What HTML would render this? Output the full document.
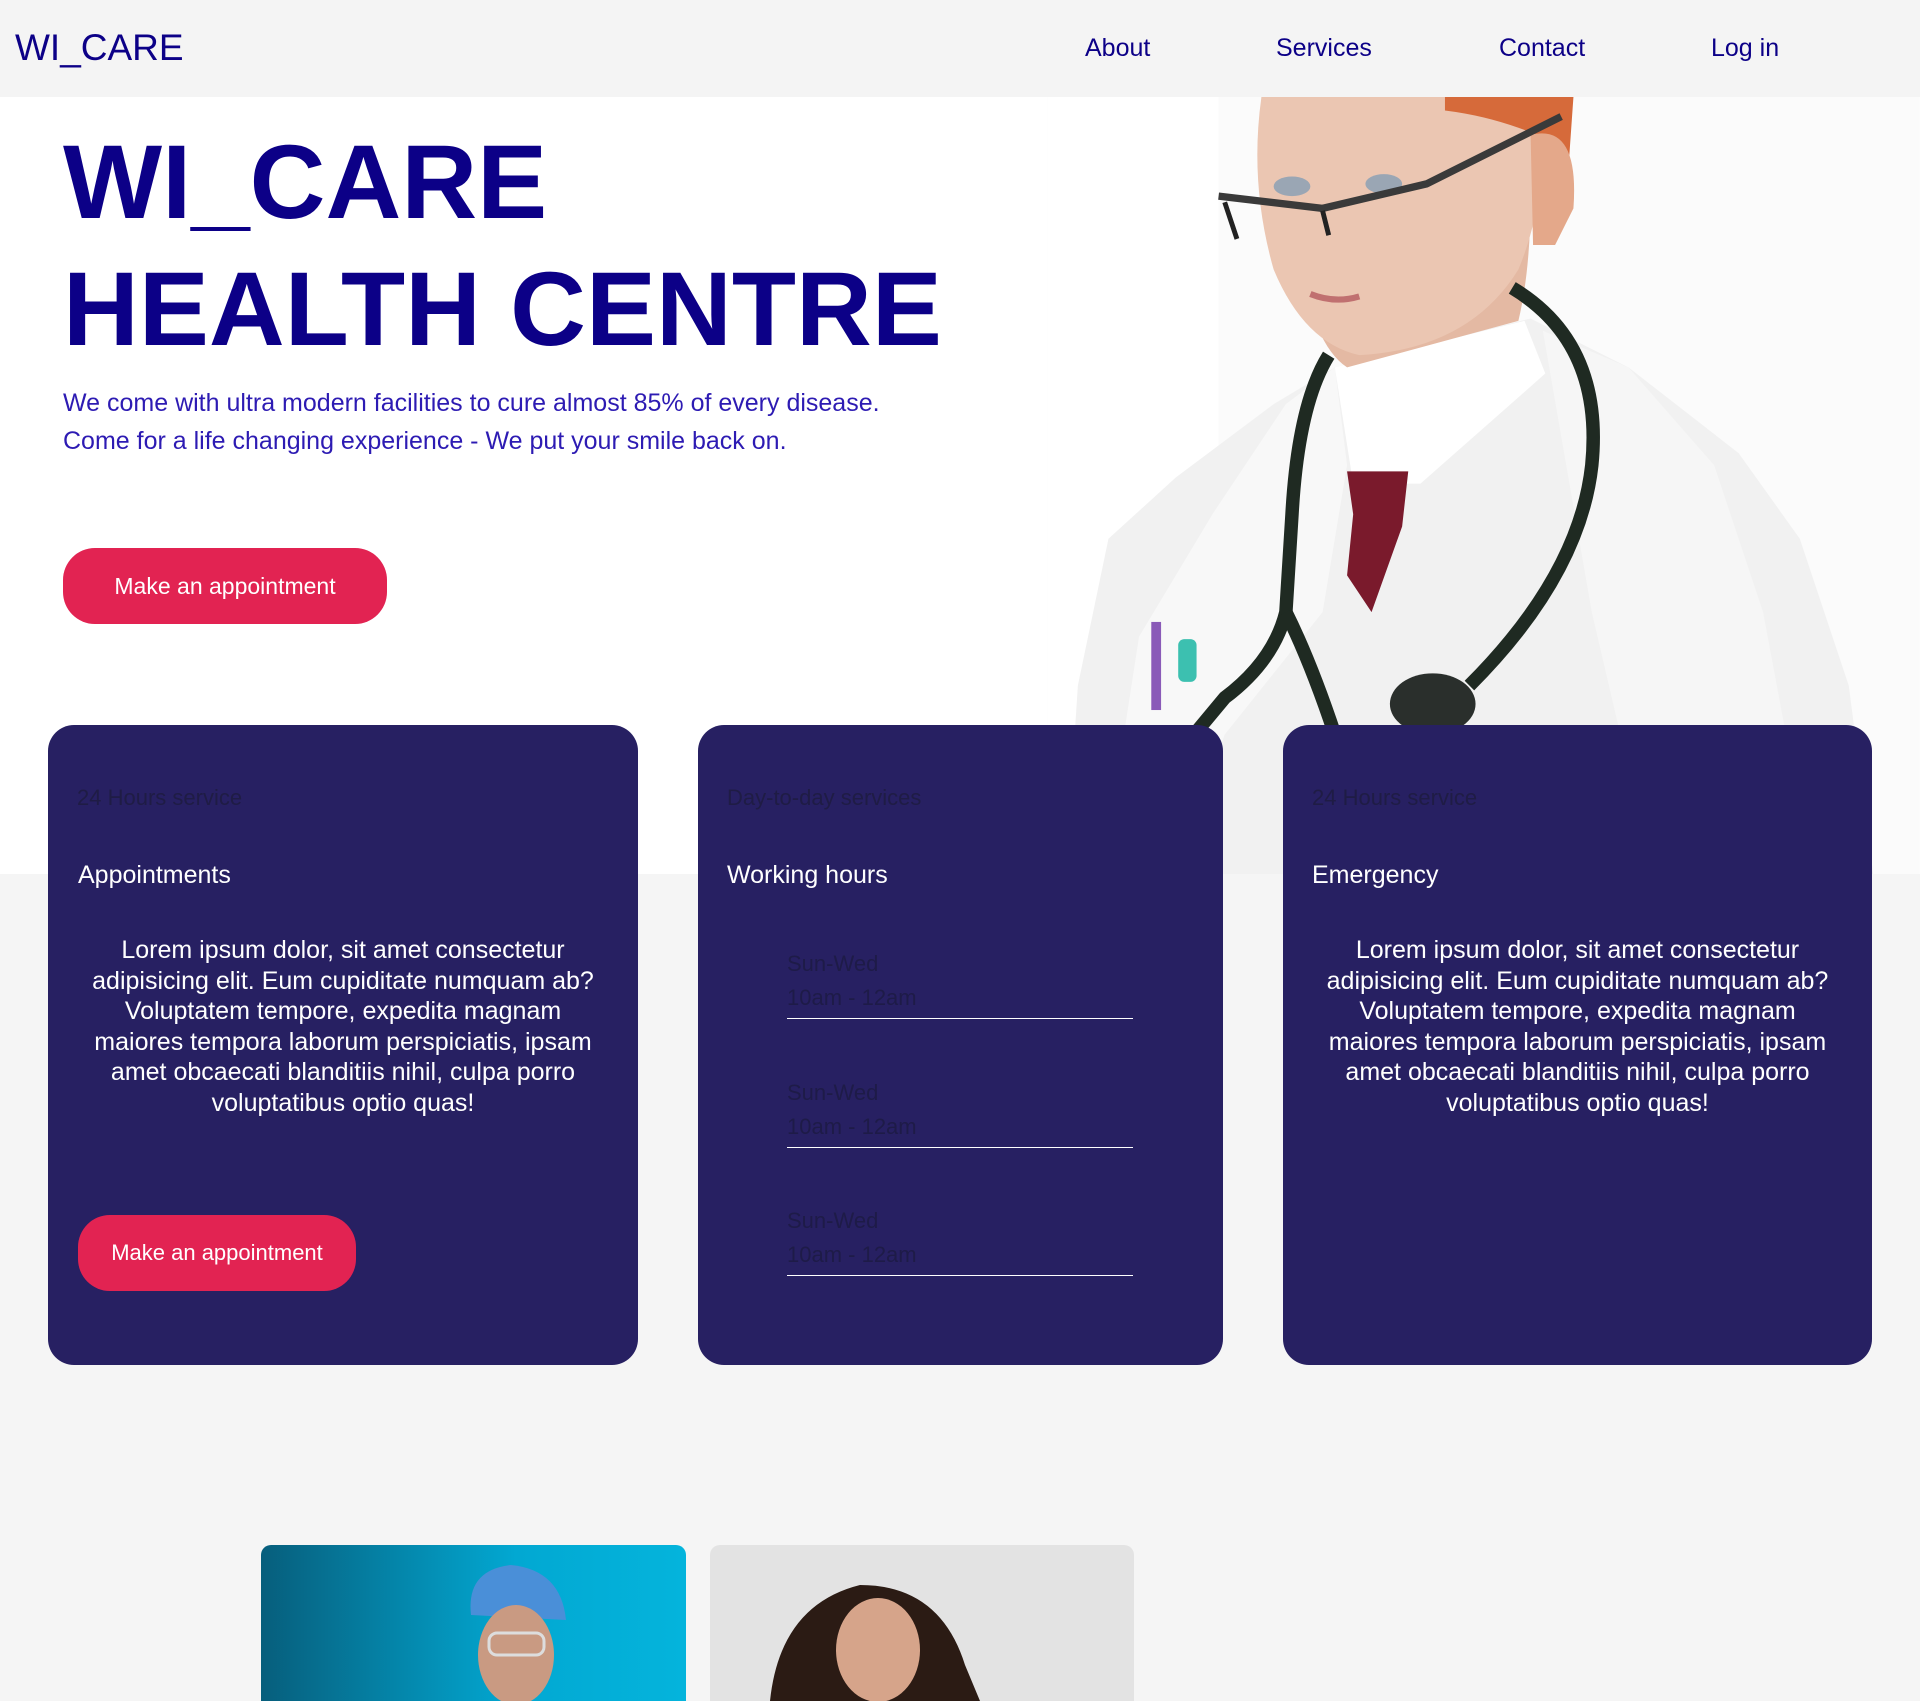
<!DOCTYPE html>
<html><head><meta charset="utf-8">
<style>
*{margin:0;padding:0;box-sizing:border-box}
body{width:1920px;height:1701px;overflow:hidden;background:#f5f5f5;font-family:"Liberation Sans",Arial,sans-serif;position:relative}
.nav{position:absolute;left:0;top:0;width:1920px;height:97px;background:#f4f4f4}
.logo{position:absolute;left:15px;top:25px;font-size:37px;color:#0c0087;line-height:46px}
.nl{position:absolute;top:33px;font-size:25px;color:#0c0087;line-height:30px}
.hero{position:absolute;left:0;top:97px;width:1920px;height:777px;background:#fff}
.t{position:absolute;left:63px;font-weight:bold;font-size:105px;color:#0c0087;line-height:127px;white-space:nowrap}
.p{position:absolute;left:63px;top:287px;font-size:25px;line-height:38px;color:#2d1bb3}
.btn{position:absolute;background:#e22352;color:#fff;border-radius:32px;font-size:23px;text-align:center}
.card{position:absolute;top:725px;height:640px;background:#272062;border-radius:26px}
.lab{position:absolute;top:785px;font-size:22px;color:#1f1c45;line-height:26px}
.h{position:absolute;top:860px;font-size:25px;color:#fff;line-height:30px}
.lo{position:absolute;top:935px;font-size:25px;line-height:30.6px;color:#fff;text-align:center}
.wh{position:absolute;left:787px;width:346px;border-bottom:1.5px solid #fff;font-size:22px;color:#1e1b48;line-height:34px;height:84px;padding-top:12px}
</style></head><body>
<div class="nav">
<div class="logo">WI_CARE</div>
<div class="nl" style="left:1085px">About</div>
<div class="nl" style="left:1276px">Services</div>
<div class="nl" style="left:1499px">Contact</div>
<div class="nl" style="left:1711px">Log in</div>
</div>
<div class="hero">
<svg style="position:absolute;left:1047px;top:0" width="873" height="777" viewBox="855 79 713 635">
<rect x="855" y="79" width="713" height="635" fill="#fbfbfb"/>
<rect x="855" y="79" width="140" height="635" fill="#fff"/>
<path d="M870 714 L880 560 L905 440 L960 390 L1040 330 L1090 300 L1250 260 L1330 300 L1420 370 L1470 440 L1510 560 L1530 714 Z" fill="#f1f1f1"/>
<path d="M990 420 L1050 330 L1090 300 L1100 380 L1080 500 L1000 600 L960 714 L900 714 L930 520 Z" fill="#f8f8f8"/>
<path d="M1260 270 L1330 300 L1400 380 L1440 500 L1480 714 L1350 714 L1300 500 Z" fill="#f6f6f6"/>
<path d="M1090 300 L1245 262 L1262 305 L1160 395 L1105 395 Z" fill="#ffffff"/>
<path d="M1100 385 L1150 385 L1145 430 L1120 500 L1100 470 L1105 420 Z" fill="#7a1a2c"/>
<path d="M1060 200 Q1070 280 1100 300 L1240 262 Q1250 220 1250 160 Z" fill="#e4b9a3"/>
<path d="M1030 79 L1260 79 Q1265 160 1240 220 Q1200 285 1110 290 Q1065 280 1040 220 Q1020 150 1030 79 Z" fill="#ebc6b2"/>
<path d="M1180 79 L1285 79 L1280 150 L1255 110 Q1220 95 1180 90 Z" fill="#d66a3a"/>
<path d="M1250 110 Q1290 100 1285 170 L1270 200 L1252 200 Z" fill="#e4a88a"/>
<ellipse cx="1055" cy="152" rx="15" ry="8" fill="#9aa6b4"/>
<ellipse cx="1130" cy="150" rx="15" ry="8" fill="#9aa6b4"/>
<path d="M995 160 L1080 170 L1165 150 L1275 95" stroke="#3a3a3a" stroke-width="6" fill="none"/>
<path d="M1000 165 L1010 195 M1080 172 L1085 192" stroke="#222" stroke-width="4" fill="none"/>
<path d="M1070 240 Q1090 248 1110 242" stroke="#c07070" stroke-width="5" fill="none"/>
<path d="M1085 290 Q1060 330 1055 420 L1050 500 Q1040 540 1000 570 L975 600" stroke="#1f2a22" stroke-width="11" fill="none"/>
<path d="M1050 500 Q1070 540 1090 600" stroke="#1f2a22" stroke-width="11" fill="none"/>
<path d="M1235 235 Q1310 280 1300 380 Q1290 470 1200 560" stroke="#1f2a22" stroke-width="11" fill="none"/>
<ellipse cx="1170" cy="575" rx="35" ry="25" fill="#2a2f2c"/>
<rect x="940" y="508" width="8" height="72" fill="#8a5ab8"/>
<rect x="962" y="522" width="15" height="35" rx="5" fill="#3cc0b0"/>
</svg>
<div class="t" style="top:22px">WI_CARE</div>
<div class="t" style="top:149px">HEALTH CENTRE</div>
<div class="p">We come with ultra modern facilities to cure almost 85% of every disease.<br>Come for a life changing experience - We put your smile back on.</div>
<div class="btn" style="left:63px;top:451px;width:324px;height:76px;line-height:76px">Make an appointment</div>
</div>

<div class="card" style="left:48px;width:590px"></div>
<div class="card" style="left:698px;width:525px"></div>
<div class="card" style="left:1283px;width:589px"></div>

<div class="lab" style="left:77px">24 Hours service</div>
<div class="h" style="left:78px">Appointments</div>
<div class="lo" style="left:48px;width:590px">Lorem ipsum dolor, sit amet consectetur<br>adipisicing elit. Eum cupiditate numquam ab?<br>Voluptatem tempore, expedita magnam<br>maiores tempora laborum perspiciatis, ipsam<br>amet obcaecati blanditiis nihil, culpa porro<br>voluptatibus optio quas!</div>
<div class="btn" style="left:78px;top:1215px;width:278px;height:76px;line-height:76px;font-size:22px">Make an appointment</div>

<div class="lab" style="left:727px">Day-to-day services</div>
<div class="h" style="left:727px">Working hours</div>
<div class="wh" style="top:935px">Sun-Wed<br>10am - 12am</div>
<div class="wh" style="top:1064px">Sun-Wed<br>10am - 12am</div>
<div class="wh" style="top:1192px">Sun-Wed<br>10am - 12am</div>

<div class="lab" style="left:1312px">24 Hours service</div>
<div class="h" style="left:1312px">Emergency</div>
<div class="lo" style="left:1283px;width:589px">Lorem ipsum dolor, sit amet consectetur<br>adipisicing elit. Eum cupiditate numquam ab?<br>Voluptatem tempore, expedita magnam<br>maiores tempora laborum perspiciatis, ipsam<br>amet obcaecati blanditiis nihil, culpa porro<br>voluptatibus optio quas!</div>

<svg style="position:absolute;left:261px;top:1545px" width="425" height="156" viewBox="0 0 425 156">
<defs><linearGradient id="g" x1="0" x2="1" y1="0" y2="0"><stop offset="0" stop-color="#075e7c"/><stop offset="0.6" stop-color="#02a8d2"/><stop offset="1" stop-color="#04b4dc"/></linearGradient>
<clipPath id="c1"><rect width="425" height="200" rx="10"/></clipPath></defs>
<g clip-path="url(#c1)">
<rect width="425" height="156" fill="url(#g)"/>
<path d="M210 70 Q205 25 250 20 Q300 25 305 75 Z" fill="#4a8fd8"/>
<ellipse cx="255" cy="110" rx="38" ry="50" fill="#c99a82"/>
<rect x="228" y="88" width="55" height="22" rx="8" fill="none" stroke="#ddd" stroke-width="3"/>
</g></svg>
<svg style="position:absolute;left:710px;top:1545px" width="424" height="156" viewBox="0 0 424 156">
<defs><clipPath id="c2"><rect width="424" height="200" rx="10"/></clipPath></defs>
<g clip-path="url(#c2)">
<rect width="424" height="156" fill="#e3e3e3"/>
<path d="M60 156 Q70 60 150 40 Q230 40 255 120 L270 156 Z" fill="#2b1b14"/>
<ellipse cx="168" cy="105" rx="42" ry="52" fill="#d6a48a"/>
</g></svg>
</body></html>
